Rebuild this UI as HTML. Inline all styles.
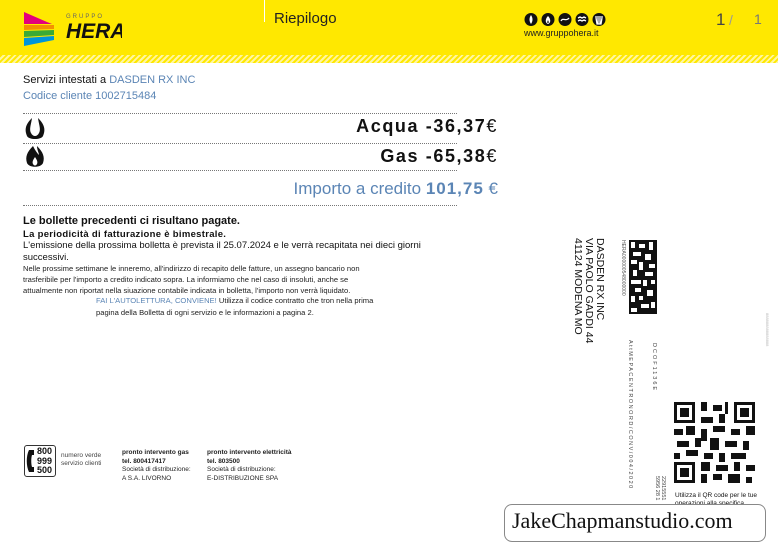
<!DOCTYPE html>
<html><head><meta charset="utf-8"><style>
*{margin:0;padding:0;box-sizing:border-box}
body{width:778px;height:552px;background:#fff;position:relative;overflow:hidden;font-family:"Liberation Sans",Arial,sans-serif;color:#111}
.a{position:absolute;white-space:nowrap}
.hdr{position:absolute;left:0;top:0;width:778px;height:56px;background:#ffe800}
.hatch{position:absolute;left:0;top:55px;width:778px;height:8px;background:repeating-linear-gradient(135deg,#ffe800 0 2px,#fff6a0 2px 4px)}
.dot{position:absolute;left:23px;width:434px;border-top:1px dotted #777}
.blue{color:#5b85b5}
.rot{position:absolute;transform-origin:0 0;transform:rotate(90deg);white-space:nowrap}
</style></head><body>
<div class="hdr"></div><div class="hatch"></div>
<svg class="a" style="left:22px;top:10px" width="100" height="40" viewBox="0 0 100 40">
<polygon points="2,2 25,12 30,14 2,14" fill="#e4007c"/>
<polygon points="2,15 32,15 32,19 2,20" fill="#f39200"/>
<polygon points="2,21 32,20 32,25 2,27" fill="#3aaa35"/>
<polygon points="2,28 32,26 32,30 2,36" fill="#0095d9"/>
<text x="44" y="8" font-size="6" fill="#666" letter-spacing="2" font-family="Liberation Sans">GRUPPO</text>
<text x="44" y="28" font-size="21" font-weight="bold" font-style="italic" fill="#111" font-family="Liberation Sans">HERA</text>
</svg>
<div class="a" style="left:264px;top:0;width:1px;height:22px;background:#fff"></div>
<div class="a" style="left:274px;top:10px;font-size:15px;color:#222">Riepilogo</div>
<svg class="a" style="left:524px;top:12px" width="88" height="15" viewBox="0 0 88 15">
<g fill="#111"><circle cx="7" cy="7.5" r="6.5"/><circle cx="24" cy="7.5" r="6.5"/><circle cx="41" cy="7.5" r="6.5"/><circle cx="58" cy="7.5" r="6.5"/><circle cx="75" cy="7.5" r="6.5"/></g>
<g fill="#fff" stroke="none"><path d="M7 3C5 6 5 9 7 12C9 9 9 6 7 3Z"/><path d="M24 4C21 7 21 11 24 12C27 11 27 7 24 4ZM24 8C23 10 23 11 24 11C25 11 25 10 24 8Z" fill-rule="evenodd"/></g>
<g fill="none" stroke="#fff" stroke-width="1.3"><path d="M37 9C39 5 42 10 45 6"/><path d="M54 6L56 5L58 6L60 5L62 6M54 9L56 8L58 9L60 8L62 9"/><path d="M71 5H79M72 6L73 12H77L78 6M74 6V12M76 6V12"/></g></svg>
<div class="a" style="left:524px;top:28px;font-size:9px;color:#222">www.gruppohera.it</div>
<div class="a" style="left:716px;top:10px;font-size:17px;color:#444">1</div>
<div class="a" style="left:729px;top:12px;font-size:14px;color:#999">/</div>
<div class="a" style="left:754px;top:11px;font-size:14px;color:#777">1</div>

<div class="a" style="left:23px;top:74px;font-size:11px">Servizi intestati a <span class="blue">DASDEN RX INC</span></div>
<div class="a blue" style="left:23px;top:90px;font-size:11px">Codice cliente 1002715484</div>
<div class="dot" style="top:113px"></div>
<svg class="a" style="left:24px;top:117px" width="22" height="24" viewBox="0 0 22 24"><path d="M8 1C2 7 0 12 3 19C5 23 17 23 19 19C22 12 20 7 14 1C15 8 17 12 15 16C13 20 9 20 7 16C5 12 7 8 8 1Z" fill="#111"/></svg>
<div class="a" style="right:280px;top:116px;font-size:18px;font-weight:bold;letter-spacing:1.6px">Acqua -36,37<span style="font-weight:normal">€</span></div>
<div class="dot" style="top:143px"></div>
<svg class="a" style="left:24px;top:145px" width="22" height="24" viewBox="0 0 22 24"><path d="M9 1C3 7 1 12 3 18C5 23 17 23 19 18C21 12 19 7 13 1C13 5 15 8 15 10C13 8 11 5 9 1Z M11 12C9 15 8 17 9 19C10 21 12 21 13 19C14 17 13 15 11 12Z" fill="#111" fill-rule="evenodd"/></svg>
<div class="a" style="right:280px;top:146px;font-size:18px;font-weight:bold;letter-spacing:1.6px">Gas -65,38<span style="font-weight:normal">€</span></div>
<div class="dot" style="top:170px"></div>
<div class="a blue" style="right:280px;top:179px;font-size:17px">Importo a credito <b style="letter-spacing:1px">101,75</b> €</div>
<div class="dot" style="top:205px"></div>

<div class="a" style="left:23px;top:215px;font-size:11px;font-weight:bold">Le bollette precedenti ci risultano pagate.</div>
<div class="a" style="left:23px;top:229px;font-size:9.5px;font-weight:bold;letter-spacing:.3px">La periodicità di fatturazione è bimestrale.</div>
<div class="a" style="left:23px;top:240px;font-size:9.5px;line-height:12px">L'emissione della prossima bolletta è prevista il 25.07.2024 e le verrà recapitata nei dieci giorni<br>successivi.</div>
<div class="a" style="left:23px;top:263px;font-size:7.6px;line-height:11px;color:#222">Nelle prossime settimane le inneremo, all'indirizzo di recapito delle fatture, un assegno bancario non<br>trasferibile per l'importo a credito indicato sopra. La informiamo che nel caso di insoluti, anche se<br>attualmente non riportat nella siuazione contabile indicata in bolletta, l'importo non verrà liquidato.</div>
<div class="a" style="left:96px;top:295px;font-size:7.6px;line-height:12px;color:#222"><span class="blue">FAI L'AUTOLETTURA, CONVIENE!</span> Utilizza il codice contratto che tron nella prima<br>pagina della Bolletta di ogni servizio e le informazioni a pagina 2.</div>

<div class="rot" style="left:605px;top:238px;font-size:10.5px;line-height:11px">DASDEN RX INC<br>VIA PAOLO GADDI 44<br>41124 MODENA MO</div>
<div class="rot" style="left:626px;top:240px;font-size:5px;color:#555">HERA000000548000000</div>
<svg class="a" style="left:629px;top:240px" width="28" height="74" viewBox="0 0 14 37"><rect width="14" height="37" fill="#111"/><g fill="#fff"><rect x="1" y="1" width="2" height="3"/><rect x="5" y="2" width="3" height="2"/><rect x="10" y="1" width="2" height="4"/><rect x="2" y="6" width="4" height="2"/><rect x="8" y="7" width="3" height="3"/><rect x="1" y="10" width="3" height="2"/><rect x="5" y="11" width="2" height="4"/><rect x="10" y="12" width="3" height="2"/><rect x="2" y="15" width="2" height="3"/><rect x="8" y="16" width="4" height="2"/><rect x="1" y="20" width="5" height="2"/><rect x="7" y="20" width="2" height="3"/><rect x="11" y="20" width="2" height="2"/><rect x="3" y="24" width="3" height="2"/><rect x="9" y="25" width="3" height="3"/><rect x="1" y="28" width="2" height="3"/><rect x="5" y="28" width="2" height="2"/><rect x="6" y="32" width="4" height="2"/><rect x="1" y="34" width="3" height="2"/><rect x="11" y="31" width="2" height="3"/></g></svg>
<div class="rot" style="left:657px;top:343px;font-size:5.5px;color:#444;letter-spacing:2px">DCOF1136E</div>
<div class="rot" style="left:633px;top:340px;font-size:5.5px;color:#444;letter-spacing:1.5px">AttMEPACENTRONORD/CONV/004/2020</div>
<div class="rot" style="left:666px;top:476px;font-size:5.5px;color:#444;line-height:6px">22915551<br>5956 28 1</div>
<div class="rot" style="left:770px;top:313px;font-size:4px;color:#bbb">888888888888888</div>
<svg class="a" style="left:674px;top:402px" width="81" height="81" viewBox="0 0 27 27"><g fill="#111">
<rect x="0" y="0" width="7" height="7"/><rect x="20" y="0" width="7" height="7"/><rect x="0" y="20" width="7" height="7"/></g>
<g fill="#fff"><rect x="1" y="1" width="5" height="5"/><rect x="21" y="1" width="5" height="5"/><rect x="1" y="21" width="5" height="5"/></g>
<g fill="#111"><rect x="2" y="2" width="3" height="3"/><rect x="22" y="2" width="3" height="3"/><rect x="2" y="22" width="3" height="3"/>
<rect x="9" y="0" width="2" height="3"/><rect x="13" y="1" width="3" height="2"/><rect x="17" y="0" width="1" height="4"/><rect x="9" y="5" width="4" height="2"/><rect x="15" y="4" width="2" height="3"/>
<rect x="0" y="9" width="3" height="2"/><rect x="4" y="8" width="3" height="3"/><rect x="9" y="9" width="2" height="4"/><rect x="13" y="8" width="4" height="2"/><rect x="19" y="9" width="3" height="2"/><rect x="24" y="8" width="3" height="3"/>
<rect x="1" y="13" width="4" height="2"/><rect x="7" y="12" width="2" height="3"/><rect x="12" y="12" width="3" height="4"/><rect x="17" y="13" width="4" height="2"/><rect x="23" y="13" width="2" height="3"/>
<rect x="0" y="17" width="2" height="2"/><rect x="4" y="16" width="4" height="2"/><rect x="10" y="17" width="3" height="2"/><rect x="15" y="17" width="2" height="3"/><rect x="19" y="17" width="5" height="2"/>
<rect x="9" y="20" width="3" height="3"/><rect x="14" y="21" width="4" height="2"/><rect x="20" y="20" width="2" height="3"/><rect x="24" y="21" width="3" height="2"/>
<rect x="9" y="24" width="2" height="3"/><rect x="13" y="24" width="3" height="2"/><rect x="18" y="24" width="4" height="3"/><rect x="24" y="25" width="2" height="2"/></g></svg>
<div class="a" style="left:675px;top:492px;font-size:6.5px;line-height:8px">Utilizza il QR code per le tue<br>operazioni alla specifica</div>

<div class="a" style="left:24px;top:445px;width:32px;height:32px;border:1px solid #333;border-radius:3px"></div>
<svg class="a" style="left:26px;top:448px" width="10" height="26" viewBox="0 0 10 26"><path d="M3 2H8V7H6C5 10 5 16 6 19H8V24H3C0 18 0 8 3 2Z" fill="#111"/></svg>
<div class="a" style="left:37px;top:447px;font-size:9px;line-height:9.5px;font-weight:bold">800<br>999<br>500</div>
<div class="a" style="left:61px;top:452px;font-size:6.5px;line-height:7.5px;color:#444">numero verde<br>servizio clienti</div>
<div class="a" style="left:122px;top:449px;font-size:6.5px;line-height:8.5px;color:#222"><b>pronto intervento gas<br>tel. 800417417</b><br>Società di distribuzione:<br>A S.A. LIVORNO</div>
<div class="a" style="left:207px;top:449px;font-size:6.5px;line-height:8.5px;color:#222"><b>pronto intervento elettricità<br>tel. 803500</b><br>Società di distribuzione:<br>E-DISTRIBUZIONE SPA</div>

<div class="a" style="left:504px;top:504px;width:262px;height:38px;background:#fff;border:1px solid #888;border-radius:8px"></div>
<div class="a" style="left:512px;top:508px;font-family:'Liberation Serif',serif;font-size:22px;color:#111">JakeChapmanstudio.com</div>
</body></html>
